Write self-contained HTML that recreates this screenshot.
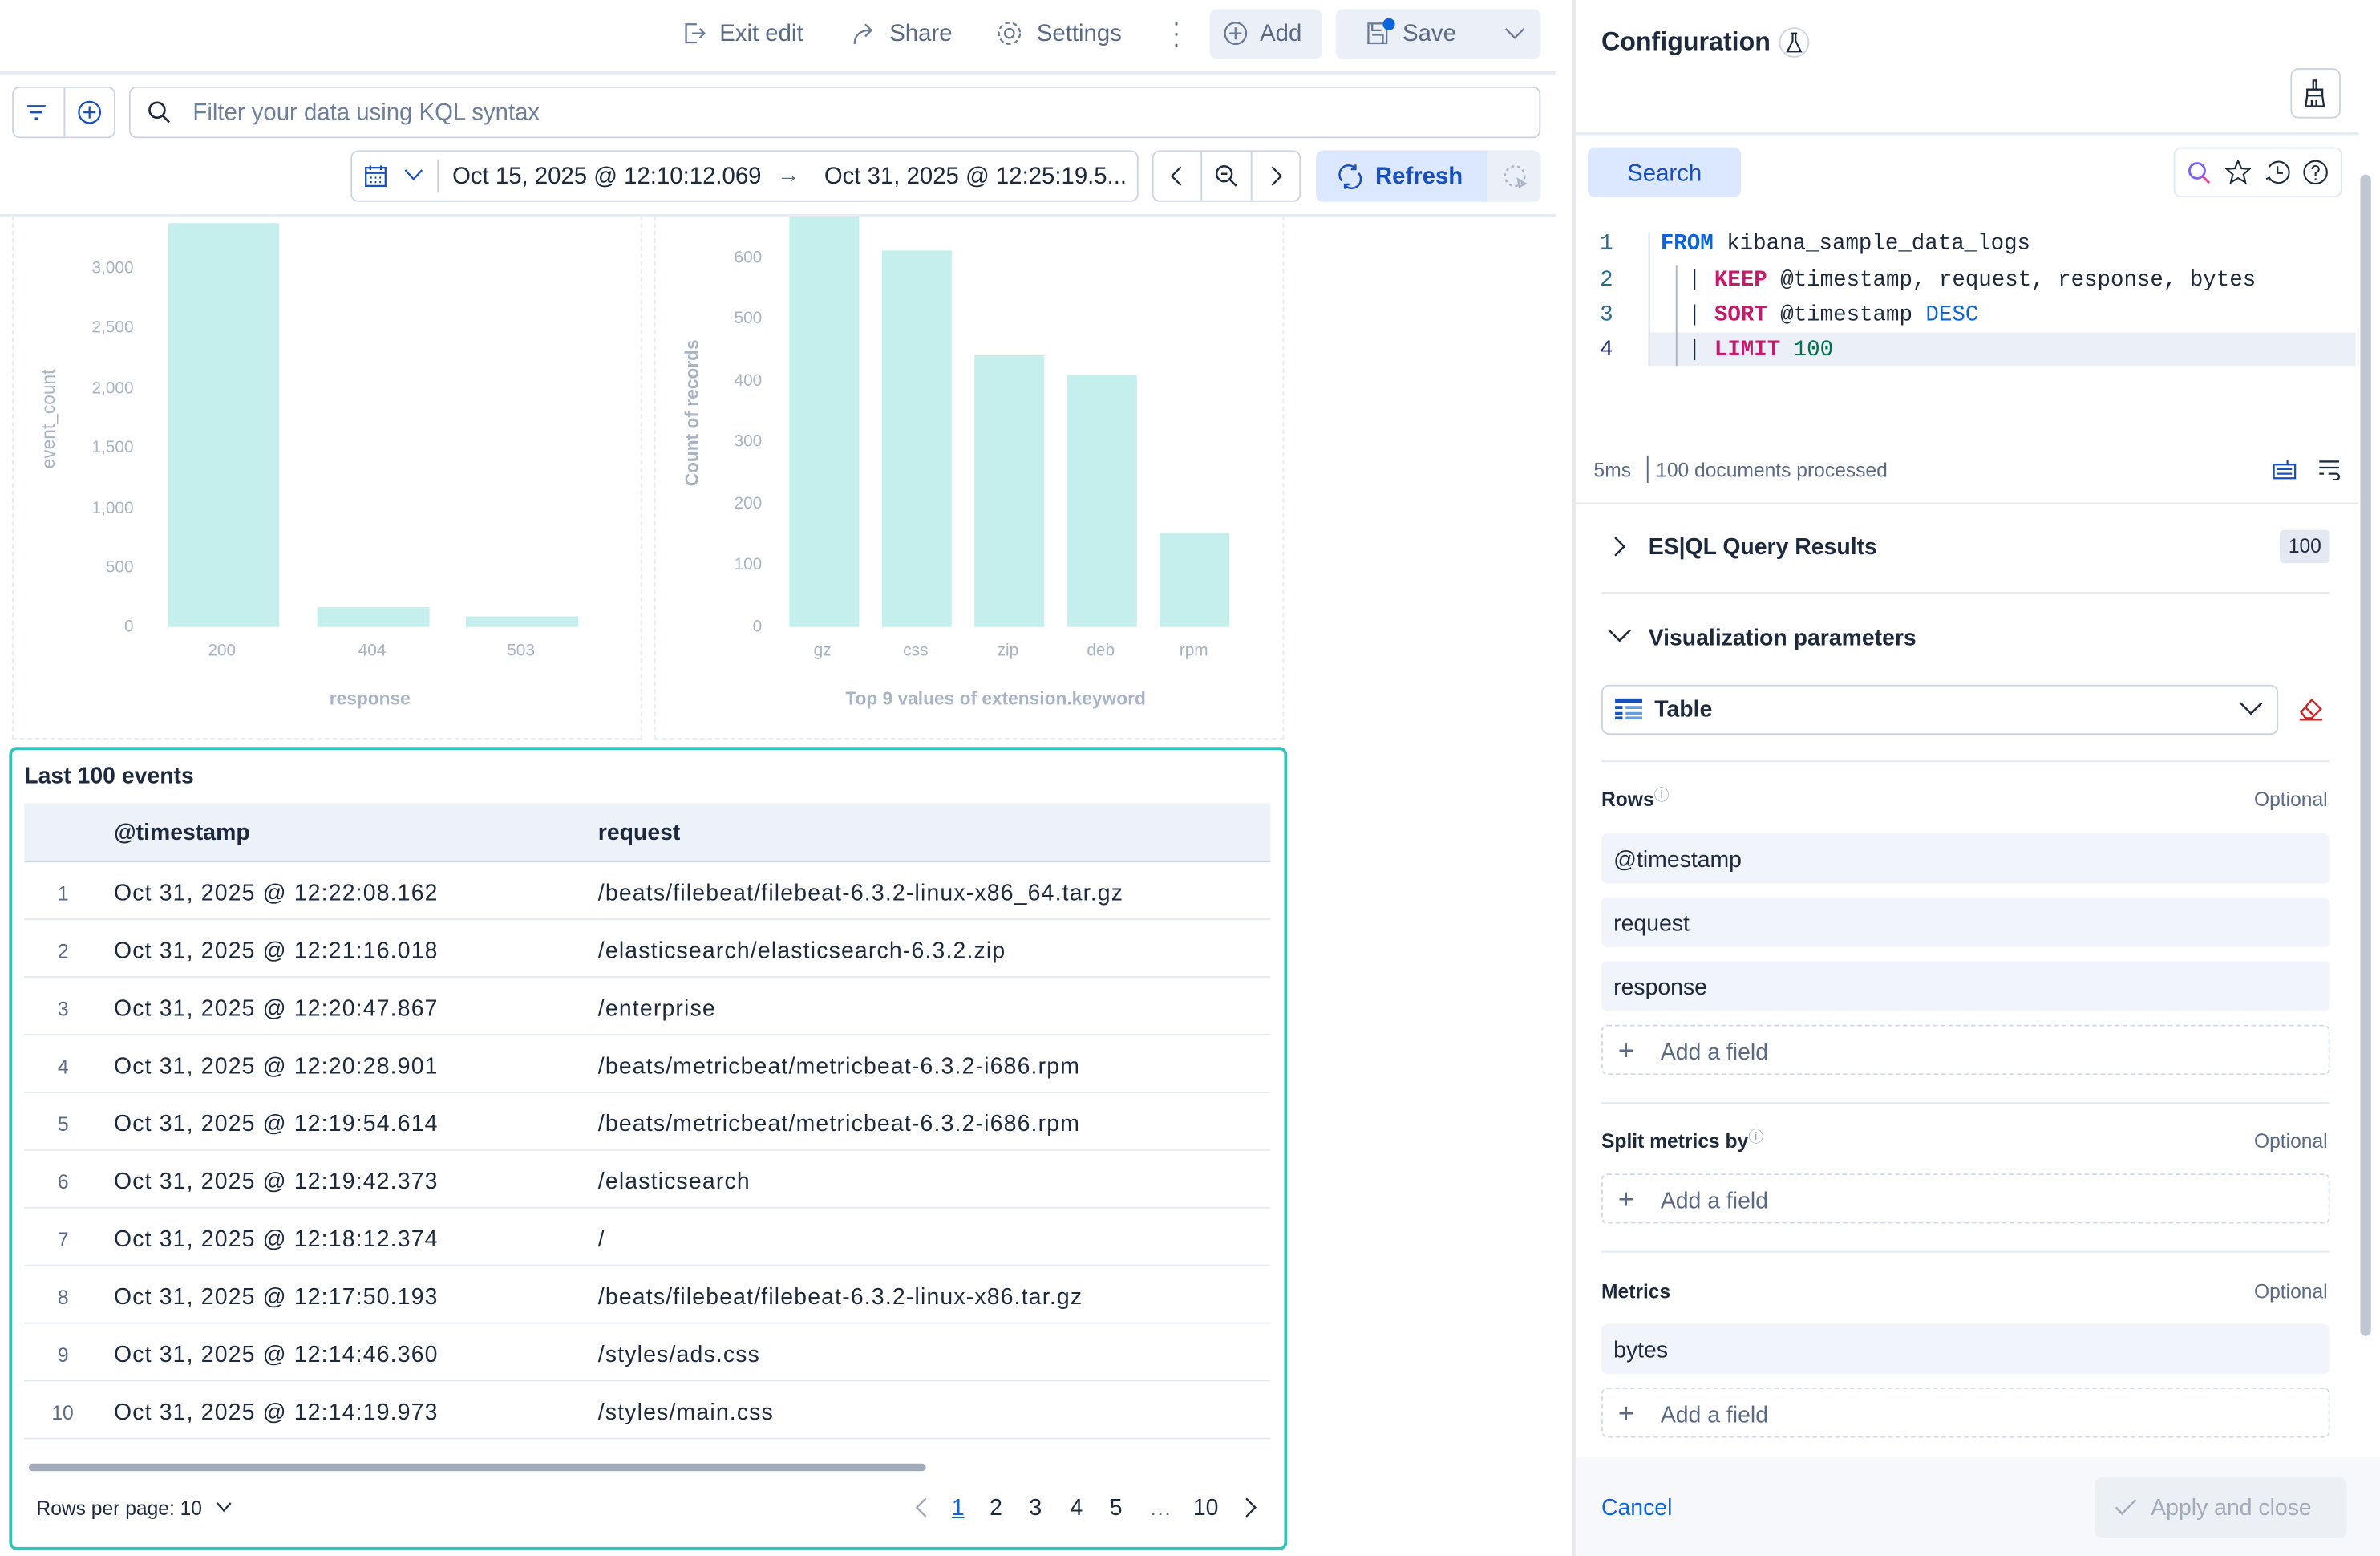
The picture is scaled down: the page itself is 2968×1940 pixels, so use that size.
<!DOCTYPE html>
<html><head><meta charset="utf-8">
<style>
*{box-sizing:border-box;margin:0;padding:0}
html,body{width:2968px;height:1940px;overflow:hidden;background:#fff}
#s{position:absolute;left:0;top:0;width:1568px;height:1025px;transform:scale(1.8929);transform-origin:0 0;font-family:"Liberation Sans",sans-serif;color:#1d2a3e;font-size:15px}
.a{position:absolute}
.t{position:absolute;white-space:nowrap;line-height:1}
.tb{color:#5a6a85;font-size:15.5px}
.ax{color:#a8b3c4;font-size:11px}
.btn{position:absolute;border-radius:5px}
.row{position:absolute;left:16px;width:821px;height:38px;border-bottom:1px solid #e3e8f2}
.row span{position:absolute;top:12px;white-space:nowrap;font-size:15px;letter-spacing:0.62px}
.row span:first-child{letter-spacing:0}
.fld{position:absolute;left:1055px;width:480px;height:33px;background:#f1f4fa;border-radius:4px}
.fld span{position:absolute;left:8px;top:9px;font-size:15px}
.add{position:absolute;left:1055px;width:480px;height:33px;border:1px dashed #d3dae6;border-radius:4px;color:#5a6a85}
.add span{position:absolute;left:38px;top:9px;font-size:15px}
.add i{position:absolute;left:10px;top:7px;font-style:normal;font-size:18px;line-height:1;color:#5a6a85}
.hr{position:absolute;height:1px;background:#e3e8f2}
.code{font-family:"Liberation Mono",monospace;font-size:14.5px}
</style></head><body><div id="s">

<!-- top bar -->
<div class="hr" style="left:0;top:47px;width:1025px;height:2px;background:#e6ebf4"></div>
<svg class="a" style="left:450px;top:14px" width="16" height="16" viewBox="0 0 16 16" fill="none" stroke="#6a7a95" stroke-width="1.2"><path d="M9 2H2v12h7M6 8h8M11 5l3 3-3 3"/></svg>
<div class="t tb" style="left:474px;top:15px">Exit edit</div>
<svg class="a" style="left:561px;top:14px" width="17" height="16" viewBox="0 0 17 16" fill="none" stroke="#6a7a95" stroke-width="1.2"><path d="M2 15C2 9 6 6 12 6M9 2l4 4-4 4"/></svg>
<div class="t tb" style="left:586px;top:15px">Share</div>
<svg class="a" style="left:656px;top:13px" width="18" height="18" viewBox="0 0 18 18" fill="none" stroke="#6a7a95" stroke-width="1.2"><circle cx="9" cy="9" r="3"/><circle cx="9" cy="9" r="7" stroke-dasharray="3 2"/></svg>
<div class="t tb" style="left:683px;top:15px">Settings</div>
<div class="t" style="left:772px;top:12px;color:#5a6a85;font-size:16px;line-height:7px;width:6px;text-align:center">·<br>·<br>·</div>
<div class="btn" style="left:797px;top:6px;width:74px;height:33px;background:#ebeff7"></div>
<svg class="a" style="left:806px;top:14px" width="16" height="16" viewBox="0 0 16 16" fill="none" stroke="#6a7a95" stroke-width="1.2"><circle cx="8" cy="8" r="7"/><path d="M8 4v8M4 8h8"/></svg>
<div class="t tb" style="left:830px;top:15px">Add</div>
<div class="btn" style="left:880px;top:6px;width:135px;height:33px;background:#ebeff7"></div>
<svg class="a" style="left:900px;top:14px" width="16" height="16" viewBox="0 0 16 16" fill="none" stroke="#6a7a95" stroke-width="1.2"><rect x="1.5" y="1.5" width="12" height="13"/><path d="M4 9h7v5M4 2v4h6"/></svg>
<div class="a" style="left:911px;top:12px;width:8px;height:8px;border-radius:50%;background:#0b64dd"></div>
<div class="t tb" style="left:924px;top:15px">Save</div>
<svg class="a" style="left:991px;top:17px" width="14" height="10" viewBox="0 0 14 10" fill="none" stroke="#6a7a95" stroke-width="1.2"><path d="M1 2l6 6 6-6"/></svg>

<!-- filter row -->
<div class="btn" style="left:8px;top:57px;width:68px;height:34px;border:1px solid #cdd5e2"></div>
<div class="a" style="left:42px;top:58px;width:1px;height:32px;background:#cdd5e2"></div>
<svg class="a" style="left:16px;top:66px" width="16" height="16" viewBox="0 0 16 16" stroke="#1750ba" stroke-width="1.4"><path d="M2 4h12M4 8h8M7 12h2"/></svg>
<svg class="a" style="left:51px;top:66px" width="16" height="16" viewBox="0 0 16 16" fill="none" stroke="#1750ba" stroke-width="1.2"><circle cx="8" cy="8" r="7"/><path d="M8 4v8M4 8h8"/></svg>
<div class="btn" style="left:85px;top:57px;width:930px;height:34px;border:1px solid #cdd5e2"></div>
<svg class="a" style="left:97px;top:66px" width="16" height="16" viewBox="0 0 16 16" fill="none" stroke="#1d2a3e" stroke-width="1.4"><circle cx="6.5" cy="6.5" r="5"/><path d="M10 10l4.5 4.5"/></svg>
<div class="t" style="left:127px;top:67px;color:#6e7f9b;font-size:15.5px">Filter your data using KQL syntax</div>

<!-- date row -->
<div class="btn" style="left:231px;top:99px;width:519px;height:34px;border:1px solid #cdd5e2"></div>
<svg class="a" style="left:240px;top:108px" width="15" height="16" viewBox="0 0 15 16" fill="none" stroke="#1750ba" stroke-width="1.2"><rect x="1" y="2.5" width="13" height="12"/><path d="M1 6h13M4 1v3M11 1v3M4 9h1M7 9h1M10 9h1M4 12h1M7 12h1M10 12h1"/></svg>
<svg class="a" style="left:266px;top:111px" width="13" height="9" viewBox="0 0 13 9" fill="none" stroke="#1750ba" stroke-width="1.2"><path d="M1 1l5.5 6 5.5-6"/></svg>
<div class="a" style="left:288px;top:105px;width:1px;height:22px;background:#cdd5e2"></div>
<div class="t" style="left:298px;top:109px;font-size:15.5px">Oct 15, 2025 @ 12:10:12.069</div>
<div class="t" style="left:512px;top:108px;font-size:15px;color:#5a6a85">→</div>
<div class="t" style="left:543px;top:109px;font-size:15.5px">Oct 31, 2025 @ 12:25:19.5...</div>
<div class="btn" style="left:759px;top:99px;width:98px;height:34px;border:1px solid #cdd5e2"></div>
<div class="a" style="left:791px;top:100px;width:1px;height:32px;background:#cdd5e2"></div>
<div class="a" style="left:824px;top:100px;width:1px;height:32px;background:#cdd5e2"></div>
<svg class="a" style="left:768px;top:108px" width="14" height="16" viewBox="0 0 14 16" fill="none" stroke="#1d2a3e" stroke-width="1.2"><path d="M10 2L4 8l6 6"/></svg>
<svg class="a" style="left:800px;top:108px" width="16" height="16" viewBox="0 0 16 16" fill="none" stroke="#1d2a3e" stroke-width="1.3"><circle cx="6.5" cy="6.5" r="5"/><path d="M10 10l4.5 4.5M4.5 6.5h4"/></svg>
<svg class="a" style="left:834px;top:108px" width="14" height="16" viewBox="0 0 14 16" fill="none" stroke="#1d2a3e" stroke-width="1.2"><path d="M4 2l6 6-6 6"/></svg>
<div class="btn" style="left:867px;top:99px;width:148px;height:34px;background:#dbe8ff"></div>
<div class="a" style="left:980px;top:99px;width:35px;height:34px;background:#ebeff7;border-radius:0 5px 5px 0"></div>
<svg class="a" style="left:881px;top:108px" width="17" height="17" viewBox="0 0 17 17" fill="none" stroke="#1750ba" stroke-width="1.3"><path d="M3 11A6 6 0 0 1 12 3M14 6a6 6 0 0 1-9 8M12 0.5v3h-3M5 16.5v-3h3"/></svg>
<div class="t" style="left:906px;top:109px;font-size:15.5px;color:#1750ba;font-weight:bold">Refresh</div>
<svg class="a" style="left:990px;top:108px" width="17" height="17" viewBox="0 0 17 17" fill="none" stroke="#a8b3c4" stroke-width="1.2"><circle cx="8" cy="8" r="6.5" stroke-dasharray="2 2"/><path d="M10 10l5 3-4 2z"/></svg>
<div class="hr" style="left:0;top:141px;width:1025px;height:2px;background:#e6ebf4"></div>

<!-- charts -->
<div class="a" style="left:8px;top:142px;width:415px;height:345px;border:1px dashed #e6ebf4;border-top:none"></div>
<div class="a" style="left:431px;top:142px;width:415px;height:345px;border:1px dashed #e6ebf4;border-top:none"></div>
<div class="t ax" style="left:20px;top:177px;width:68px;text-align:right;line-height:0">3,000</div>
<div class="t ax" style="left:20px;top:216px;width:68px;text-align:right;line-height:0">2,500</div>
<div class="t ax" style="left:20px;top:256px;width:68px;text-align:right;line-height:0">2,000</div>
<div class="t ax" style="left:20px;top:295px;width:68px;text-align:right;line-height:0">1,500</div>
<div class="t ax" style="left:20px;top:335px;width:68px;text-align:right;line-height:0">1,000</div>
<div class="t ax" style="left:20px;top:374px;width:68px;text-align:right;line-height:0">500</div>
<div class="t ax" style="left:20px;top:413px;width:68px;text-align:right;line-height:0">0</div>
<div class="t" style="left:32px;top:276px;transform:translate(-50%,-50%) rotate(-90deg);color:#a8b3c4;font-size:12px">event_count</div>
<div class="a" style="left:111px;top:147px;width:73px;height:266px;background:#c4efec"></div>
<div class="a" style="left:209px;top:400px;width:74px;height:13px;background:#c4efec"></div>
<div class="a" style="left:307px;top:406px;width:74px;height:7px;background:#c4efec"></div>
<div class="t ax" style="left:137px;top:424px">200</div>
<div class="t ax" style="left:236px;top:424px">404</div>
<div class="t ax" style="left:334px;top:424px">503</div>
<div class="t" style="left:217px;top:454px;color:#a8b3c4;font-size:12px;font-weight:bold">response</div>

<div class="t ax" style="left:440px;top:170px;width:62px;text-align:right;line-height:0">600</div>
<div class="t ax" style="left:440px;top:210px;width:62px;text-align:right;line-height:0">500</div>
<div class="t ax" style="left:440px;top:251px;width:62px;text-align:right;line-height:0">400</div>
<div class="t ax" style="left:440px;top:291px;width:62px;text-align:right;line-height:0">300</div>
<div class="t ax" style="left:440px;top:332px;width:62px;text-align:right;line-height:0">200</div>
<div class="t ax" style="left:440px;top:372px;width:62px;text-align:right;line-height:0">100</div>
<div class="t ax" style="left:440px;top:413px;width:62px;text-align:right;line-height:0">0</div>
<div class="t" style="left:456px;top:272px;transform:translate(-50%,-50%) rotate(-90deg);color:#a8b3c4;font-size:12px;font-weight:bold">Count of records</div>
<div class="a" style="left:520px;top:143px;width:46px;height:270px;background:#c4efec"></div>
<div class="a" style="left:581px;top:165px;width:46px;height:248px;background:#c4efec"></div>
<div class="a" style="left:642px;top:234px;width:46px;height:179px;background:#c4efec"></div>
<div class="a" style="left:703px;top:247px;width:46px;height:166px;background:#c4efec"></div>
<div class="a" style="left:764px;top:351px;width:46px;height:62px;background:#c4efec"></div>
<div class="t ax" style="left:536px;top:424px">gz</div>
<div class="t ax" style="left:595px;top:424px">css</div>
<div class="t ax" style="left:657px;top:424px">zip</div>
<div class="t ax" style="left:716px;top:424px">deb</div>
<div class="t ax" style="left:777px;top:424px">rpm</div>
<div class="t" style="left:557px;top:454px;color:#a8b3c4;font-size:12px;font-weight:bold">Top 9 values of extension.keyword</div>

<!-- table panel -->
<div class="a" style="left:6px;top:492px;width:842px;height:529px;border:2px solid #34c3b9;border-radius:5px"></div>
<div class="t" style="left:16px;top:504px;font-size:15px;font-weight:bold">Last 100 events</div>
<div class="a" style="left:16px;top:529px;width:821px;height:39px;background:#edf1f8;border-bottom:1px solid #d3dae6"></div>
<div class="t" style="left:75px;top:541px;font-weight:bold">@timestamp</div>
<div class="t" style="left:394px;top:541px;font-weight:bold">request</div>

<div class="row" style="top:568px"><span style="left:22px;font-size:13px;color:#5a6a85;top:13px">1</span><span style="left:59px">Oct 31, 2025 @ 12:22:08.162</span><span style="left:378px">/beats/filebeat/filebeat-6.3.2-linux-x86_64.tar.gz</span></div>
<div class="row" style="top:606px"><span style="left:22px;font-size:13px;color:#5a6a85;top:13px">2</span><span style="left:59px">Oct 31, 2025 @ 12:21:16.018</span><span style="left:378px">/elasticsearch/elasticsearch-6.3.2.zip</span></div>
<div class="row" style="top:644px"><span style="left:22px;font-size:13px;color:#5a6a85;top:13px">3</span><span style="left:59px">Oct 31, 2025 @ 12:20:47.867</span><span style="left:378px">/enterprise</span></div>
<div class="row" style="top:682px"><span style="left:22px;font-size:13px;color:#5a6a85;top:13px">4</span><span style="left:59px">Oct 31, 2025 @ 12:20:28.901</span><span style="left:378px">/beats/metricbeat/metricbeat-6.3.2-i686.rpm</span></div>
<div class="row" style="top:720px"><span style="left:22px;font-size:13px;color:#5a6a85;top:13px">5</span><span style="left:59px">Oct 31, 2025 @ 12:19:54.614</span><span style="left:378px">/beats/metricbeat/metricbeat-6.3.2-i686.rpm</span></div>
<div class="row" style="top:758px"><span style="left:22px;font-size:13px;color:#5a6a85;top:13px">6</span><span style="left:59px">Oct 31, 2025 @ 12:19:42.373</span><span style="left:378px">/elasticsearch</span></div>
<div class="row" style="top:796px"><span style="left:22px;font-size:13px;color:#5a6a85;top:13px">7</span><span style="left:59px">Oct 31, 2025 @ 12:18:12.374</span><span style="left:378px">/</span></div>
<div class="row" style="top:834px"><span style="left:22px;font-size:13px;color:#5a6a85;top:13px">8</span><span style="left:59px">Oct 31, 2025 @ 12:17:50.193</span><span style="left:378px">/beats/filebeat/filebeat-6.3.2-linux-x86.tar.gz</span></div>
<div class="row" style="top:872px"><span style="left:22px;font-size:13px;color:#5a6a85;top:13px">9</span><span style="left:59px">Oct 31, 2025 @ 12:14:46.360</span><span style="left:378px">/styles/ads.css</span></div>
<div class="row" style="top:910px"><span style="left:18px;font-size:13px;color:#5a6a85;top:13px">10</span><span style="left:59px">Oct 31, 2025 @ 12:14:19.973</span><span style="left:378px">/styles/main.css</span></div>
<div class="a" style="left:19px;top:964px;width:591px;height:5px;border-radius:3px;background:#a2abba"></div>
<div class="t" style="left:24px;top:987px;font-size:13px">Rows per page: 10</div>
<svg class="a" style="left:142px;top:989px" width="11" height="8" viewBox="0 0 11 8" fill="none" stroke="#1d2a3e" stroke-width="1.2"><path d="M1 1l4.5 5 4.5-5"/></svg>
<svg class="a" style="left:602px;top:986px" width="10" height="14" viewBox="0 0 10 14" fill="none" stroke="#98a2b3" stroke-width="1.2"><path d="M8 1L2 7l6 6"/></svg>
<div class="t" style="left:627px;top:986px;color:#0b64dd;text-decoration:underline;font-size:15px">1</div>
<div class="t" style="left:652px;top:986px">2</div>
<div class="t" style="left:678px;top:986px">3</div>
<div class="t" style="left:705px;top:986px">4</div>
<div class="t" style="left:731px;top:986px">5</div>
<div class="t" style="left:757px;top:986px;color:#5a6a85">…</div>
<div class="t" style="left:786px;top:986px">10</div>
<svg class="a" style="left:819px;top:986px" width="10" height="14" viewBox="0 0 10 14" fill="none" stroke="#1d2a3e" stroke-width="1.2"><path d="M2 1l6 6-6 6"/></svg>

<!-- right panel -->
<div class="a" style="left:1036px;top:0;width:2px;height:1025px;background:#e3e8f2"></div>
<div class="t" style="left:1055px;top:19px;font-size:17px;font-weight:bold">Configuration</div>
<div class="a" style="left:1172px;top:18px;width:20px;height:20px;border:1px solid #cdd5e2;border-radius:50%"></div>
<svg class="a" style="left:1176px;top:21px" width="12" height="14" viewBox="0 0 12 14" fill="none" stroke="#1d2a3e" stroke-width="1.1"><path d="M4 1h4M5 1v5L1.5 13h9L7 6V1"/></svg>
<div class="btn" style="left:1509px;top:45px;width:33px;height:33px;border:1px solid #cdd5e2"></div>
<svg class="a" style="left:1517px;top:52px" width="16" height="19" viewBox="0 0 16 19" fill="none" stroke="#1d2a3e" stroke-width="1.2"><path d="M7 1h2v6H7zM3 7h10v4H3zM3 11l-1 7h12l-1-7M6 14v4M9 14v4"/></svg>
<div class="hr" style="left:1038px;top:87px;width:516px;height:2px;background:#e6ebf4"></div>
<div class="btn" style="left:1046px;top:97px;width:101px;height:33px;background:#dbe8ff"></div>
<div class="t" style="left:1072px;top:107px;font-size:15.5px;color:#1750ba">Search</div>
<div class="btn" style="left:1432px;top:97px;width:111px;height:33px;border:1px solid #e3e8f2"></div>
<svg class="a" style="left:1441px;top:106px" width="16" height="16" viewBox="0 0 16 16" fill="none" stroke-width="1.5"><circle cx="6.5" cy="6.5" r="5" stroke="#7b61ff"/><path d="M10 10l4.5 4.5" stroke="#e0409a"/></svg>
<svg class="a" style="left:1466px;top:105px" width="17" height="17" viewBox="0 0 17 17" fill="none" stroke="#1d2a3e" stroke-width="1.1"><path d="M8.5 1l2.2 5 5.3.4-4 3.5 1.3 5.3-4.8-2.9-4.8 2.9 1.3-5.3-4-3.5 5.3-.4z"/></svg>
<svg class="a" style="left:1492px;top:105px" width="17" height="17" viewBox="0 0 17 17" fill="none" stroke="#1d2a3e" stroke-width="1.1"><path d="M3 12A7 7 0 1 0 3 5M8.5 4.5v4.5h3.5M1 13l2-1 1 2"/></svg>
<svg class="a" style="left:1517px;top:105px" width="17" height="17" viewBox="0 0 17 17" fill="none" stroke="#1d2a3e" stroke-width="1.1"><circle cx="8.5" cy="8.5" r="7.5"/><path d="M6.3 6.5a2.2 2.2 0 1 1 2.2 2.2v2M8.5 12.5v1"/></svg>

<div class="a" style="left:1086px;top:219px;width:466px;height:22px;background:#ebeff7"></div>
<div class="a" style="left:1086px;top:153px;width:1px;height:88px;background:#d3dae6"></div>
<div class="a" style="left:1104px;top:175px;width:1px;height:66px;background:#aab3c2"></div>
<div class="t code" style="left:1054px;top:154px;color:#2a6c89">1</div>
<div class="t code" style="left:1054px;top:178px;color:#2a6c89">2</div>
<div class="t code" style="left:1054px;top:201px;color:#2a6c89">3</div>
<div class="t code" style="left:1054px;top:224px;color:#1d2a6e">4</div>
<div class="t code" style="left:1094px;top:154px"><b style="color:#0b64dd">FROM</b> kibana_sample_data_logs</div>
<div class="t code" style="left:1112px;top:178px">| <b style="color:#c51a6b">KEEP</b> @timestamp, request, response, bytes</div>
<div class="t code" style="left:1112px;top:201px">| <b style="color:#c51a6b">SORT</b> @timestamp <span style="color:#0b64dd">DESC</span></div>
<div class="t code" style="left:1112px;top:224px">| <b style="color:#c51a6b">LIMIT</b> <span style="color:#00734a">100</span></div>

<div class="t" style="left:1050px;top:303px;font-size:13px;color:#5a6a85">5ms</div>
<div class="a" style="left:1085px;top:300px;width:1px;height:18px;background:#5a6a85"></div>
<div class="t" style="left:1091px;top:303px;font-size:13px;color:#5a6a85">100 documents processed</div>
<svg class="a" style="left:1497px;top:302px" width="16" height="14" viewBox="0 0 16 14" fill="none" stroke="#1750ba" stroke-width="1.2"><rect x="1" y="4" width="14" height="9"/><path d="M3 7h10M3 10h10M10 4V1"/></svg>
<svg class="a" style="left:1527px;top:302px" width="15" height="14" viewBox="0 0 15 14" fill="none" stroke="#1d2a3e" stroke-width="1.2"><path d="M1 2h13M1 6h13M1 10h3M7 10h5a2 2 0 0 1 0 4h-2"/></svg>
<div class="hr" style="left:1038px;top:331px;width:516px"></div>
<svg class="a" style="left:1062px;top:353px" width="10" height="14" viewBox="0 0 10 14" fill="none" stroke="#1d2a3e" stroke-width="1.3"><path d="M2 1l6 6-6 6"/></svg>
<div class="t" style="left:1086px;top:353px;font-size:15px;font-weight:bold">ES|QL Query Results</div>
<div class="a" style="left:1502px;top:349px;width:33px;height:22px;background:#e3e8f2;border-radius:3px;font-size:13px;text-align:center;line-height:22px">100</div>
<div class="hr" style="left:1055px;top:390px;width:480px"></div>
<svg class="a" style="left:1059px;top:414px" width="16" height="10" viewBox="0 0 16 10" fill="none" stroke="#1d2a3e" stroke-width="1.3"><path d="M1 1l7 7 7-7"/></svg>
<div class="t" style="left:1086px;top:413px;font-size:15px;font-weight:bold">Visualization parameters</div>
<div class="btn" style="left:1055px;top:451px;width:446px;height:33px;border:1px solid #cdd5e2"></div>
<svg class="a" style="left:1064px;top:460px" width="18" height="14" viewBox="0 0 18 14" fill="#1750ba"><rect x="0" y="0" width="18" height="3"/><rect x="0" y="5" width="5" height="2"/><rect x="7" y="5" width="11" height="2" fill="#6a9ae0"/><rect x="0" y="9" width="5" height="2"/><rect x="7" y="9" width="11" height="2" fill="#6a9ae0"/><rect x="0" y="12" width="5" height="2"/><rect x="7" y="12" width="11" height="2" fill="#6a9ae0"/></svg>
<div class="t" style="left:1090px;top:460px;font-size:15px;font-weight:bold">Table</div>
<svg class="a" style="left:1475px;top:462px" width="16" height="10" viewBox="0 0 16 10" fill="none" stroke="#1d2a3e" stroke-width="1.3"><path d="M1 1l7 7 7-7"/></svg>
<svg class="a" style="left:1514px;top:459px" width="17" height="16" viewBox="0 0 17 16" fill="none" stroke="#c62828" stroke-width="1.3"><path d="M2 10l7-8 6 6-6 6H5zM5 7l5 5M1 15h15"/></svg>
<div class="hr" style="left:1055px;top:501px;width:480px"></div>
<div class="t" style="left:1055px;top:520px;font-size:13px;font-weight:bold">Rows<span style="font-weight:normal;color:#98a2b3;font-size:10px;vertical-align:top">ⓘ</span></div>
<div class="t" style="left:1485px;top:520px;font-size:13px;color:#5a6a85">Optional</div>
<div class="fld" style="top:549px"><span>@timestamp</span></div>
<div class="fld" style="top:591px"><span>request</span></div>
<div class="fld" style="top:633px"><span>response</span></div>
<div class="add" style="top:675px"><i>+</i><span>Add a field</span></div>
<div class="hr" style="left:1055px;top:726px;width:480px"></div>
<div class="t" style="left:1055px;top:745px;font-size:13px;font-weight:bold">Split metrics by<span style="font-weight:normal;color:#98a2b3;font-size:10px;vertical-align:top">ⓘ</span></div>
<div class="t" style="left:1485px;top:745px;font-size:13px;color:#5a6a85">Optional</div>
<div class="add" style="top:773px"><i>+</i><span>Add a field</span></div>
<div class="hr" style="left:1055px;top:824px;width:480px"></div>
<div class="t" style="left:1055px;top:844px;font-size:13px;font-weight:bold">Metrics</div>
<div class="t" style="left:1485px;top:844px;font-size:13px;color:#5a6a85">Optional</div>
<div class="fld" style="top:872px"><span>bytes</span></div>
<div class="add" style="top:914px"><i>+</i><span>Add a field</span></div>

<div class="a" style="left:1038px;top:960px;width:530px;height:65px;background:#f6f8fc"></div>
<div class="t" style="left:1055px;top:986px;font-size:15px;color:#0b64dd">Cancel</div>
<div class="btn" style="left:1380px;top:973px;width:166px;height:40px;background:#eceff4"></div>
<svg class="a" style="left:1393px;top:987px" width="15" height="12" viewBox="0 0 15 12" fill="none" stroke="#a2abba" stroke-width="1.3"><path d="M1 6l4 4 9-9"/></svg>
<div class="t" style="left:1417px;top:986px;font-size:15px;color:#a2abba">Apply and close</div>
<div class="a" style="left:1555px;top:115px;width:7px;height:765px;border-radius:4px;background:#c0c7d2"></div>
</div></body></html>
